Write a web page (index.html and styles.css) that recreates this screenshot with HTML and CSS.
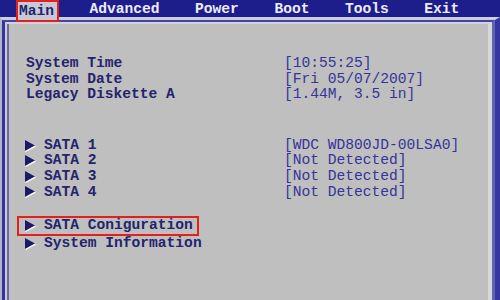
FILE: index.html
```html
<!DOCTYPE html>
<html>
<head>
<meta charset="utf-8">
<link rel="stylesheet" href="styles.css">
</head>
<body>
<div class="menubar">
  <span class="menu-item active">Main</span>
  <span class="menu-item">Advanced</span>
  <span class="menu-item">Power</span>
  <span class="menu-item">Boot</span>
  <span class="menu-item">Tools</span>
  <span class="menu-item">Exit</span>
</div>
<div class="frame">
  <div class="f2">
    <div class="f3">
      <div class="panel">
        <div class="group grid first">
          <div class="label">System Time</div><div class="value">[10:55:25]</div>
          <div class="label">System Date</div><div class="value">[Fri 05/07/2007]</div>
          <div class="label">Legacy Diskette A</div><div class="value">[1.44M, 3.5 in]</div>
        </div>
        <div class="group grid sata">
          <div class="label sub"><svg class="arrow" viewBox="0 0 11 12" width="11" height="12"><polygon points="0,0 10,5.5 0,11" fill="#1a1a66"/><polyline points="0.5,11.5 10.5,6.1" stroke="#ffffff" stroke-width="1.2" fill="none"/></svg>SATA 1</div><div class="value">[WDC WD800JD-00LSA0]</div>
          <div class="label sub"><svg class="arrow" viewBox="0 0 11 12" width="11" height="12"><polygon points="0,0 10,5.5 0,11" fill="#1a1a66"/><polyline points="0.5,11.5 10.5,6.1" stroke="#ffffff" stroke-width="1.2" fill="none"/></svg>SATA 2</div><div class="value">[Not Detected]</div>
          <div class="label sub"><svg class="arrow" viewBox="0 0 11 12" width="11" height="12"><polygon points="0,0 10,5.5 0,11" fill="#1a1a66"/><polyline points="0.5,11.5 10.5,6.1" stroke="#ffffff" stroke-width="1.2" fill="none"/></svg>SATA 3</div><div class="value">[Not Detected]</div>
          <div class="label sub"><svg class="arrow" viewBox="0 0 11 12" width="11" height="12"><polygon points="0,0 10,5.5 0,11" fill="#1a1a66"/><polyline points="0.5,11.5 10.5,6.1" stroke="#ffffff" stroke-width="1.2" fill="none"/></svg>SATA 4</div><div class="value">[Not Detected]</div>
        </div>
        <div class="group links">
          <div class="label sub selected"><svg class="arrow" viewBox="0 0 11 12" width="11" height="12"><polygon points="0,0 10,5.5 0,11" fill="#1a1a66"/><polyline points="0.5,11.5 10.5,6.1" stroke="#ffffff" stroke-width="1.2" fill="none"/></svg>SATA Coniguration</div>
          <div class="label sub"><svg class="arrow" viewBox="0 0 11 12" width="11" height="12"><polygon points="0,0 10,5.5 0,11" fill="#1a1a66"/><polyline points="0.5,11.5 10.5,6.1" stroke="#ffffff" stroke-width="1.2" fill="none"/></svg>System Information</div>
        </div>
      </div>
    </div>
  </div>
</div>
</body>
</html>
```

FILE: styles.css
```css
* { box-sizing: border-box; }
html, body { margin: 0; padding: 0; }
body {
  width: 500px;
  height: 300px;
  overflow: hidden;
  background: #bfbfbf;
  font-family: "Liberation Mono", "DejaVu Sans Mono", monospace;
  font-size: 14.6px;
}
.menubar {
  height: 17px;
  background: #1d1d8c;
  display: flex;
  align-items: flex-start;
  gap: 35.5px;
  padding-left: 19px;
  color: #ececf4;
  font-weight: bold;
  line-height: 19px;
}
.menu-item { white-space: pre; }
.menu-item.active {
  position: relative;
  z-index: 2;
  background: #c9c9d6;
  color: #24246e;
  border: 2px solid #e2201e;
  height: 22px;
  line-height: 18px;
  margin: 0 -5px 0 -3px;
  padding: 0 3px 0 1px;
}
.frame {
  height: 283px;
  border-top: 3px solid #cdcde0;
  border-left: 2px solid #b4b4cc;
  border-right: 5px solid #3636a0;
}
.f2 {
  height: 100%;
  border-top: 2px solid #4444a2;
  border-left: 3px solid #34349a;
  border-right: 3px solid #6262b2;
}
.f3 {
  height: 100%;
  border-top: 2px solid #d2d2dc;
  border-left: 2px solid #cacada;
  border-right: 4px solid #d6dad6;
}
.panel {
  height: 100%;
  border-left: 2px solid #6a6aaa;
  background: #bfbfbf;
  padding: 32px 0 0 17px;
  line-height: 15.6px;
}
.grid {
  display: grid;
  grid-template-columns: 258px 1fr;
}
.sata { margin-top: 35px; }
.links { margin-top: 16px; }
.label {
  color: #23236e;
  font-weight: bold;
  white-space: pre;
}
.value {
  color: #34349a;
  white-space: pre;
}
.sub {
  display: flex;
  align-items: center;
}
.arrow {
  flex: none;
  margin-left: -1px;
  margin-right: 8px;
}
.selected {
  width: 182px;
  height: 20px;
  border: 2px solid #e2201e;
  margin-left: -9px;
  padding-left: 7px;
  margin-bottom: 0;
}
```
